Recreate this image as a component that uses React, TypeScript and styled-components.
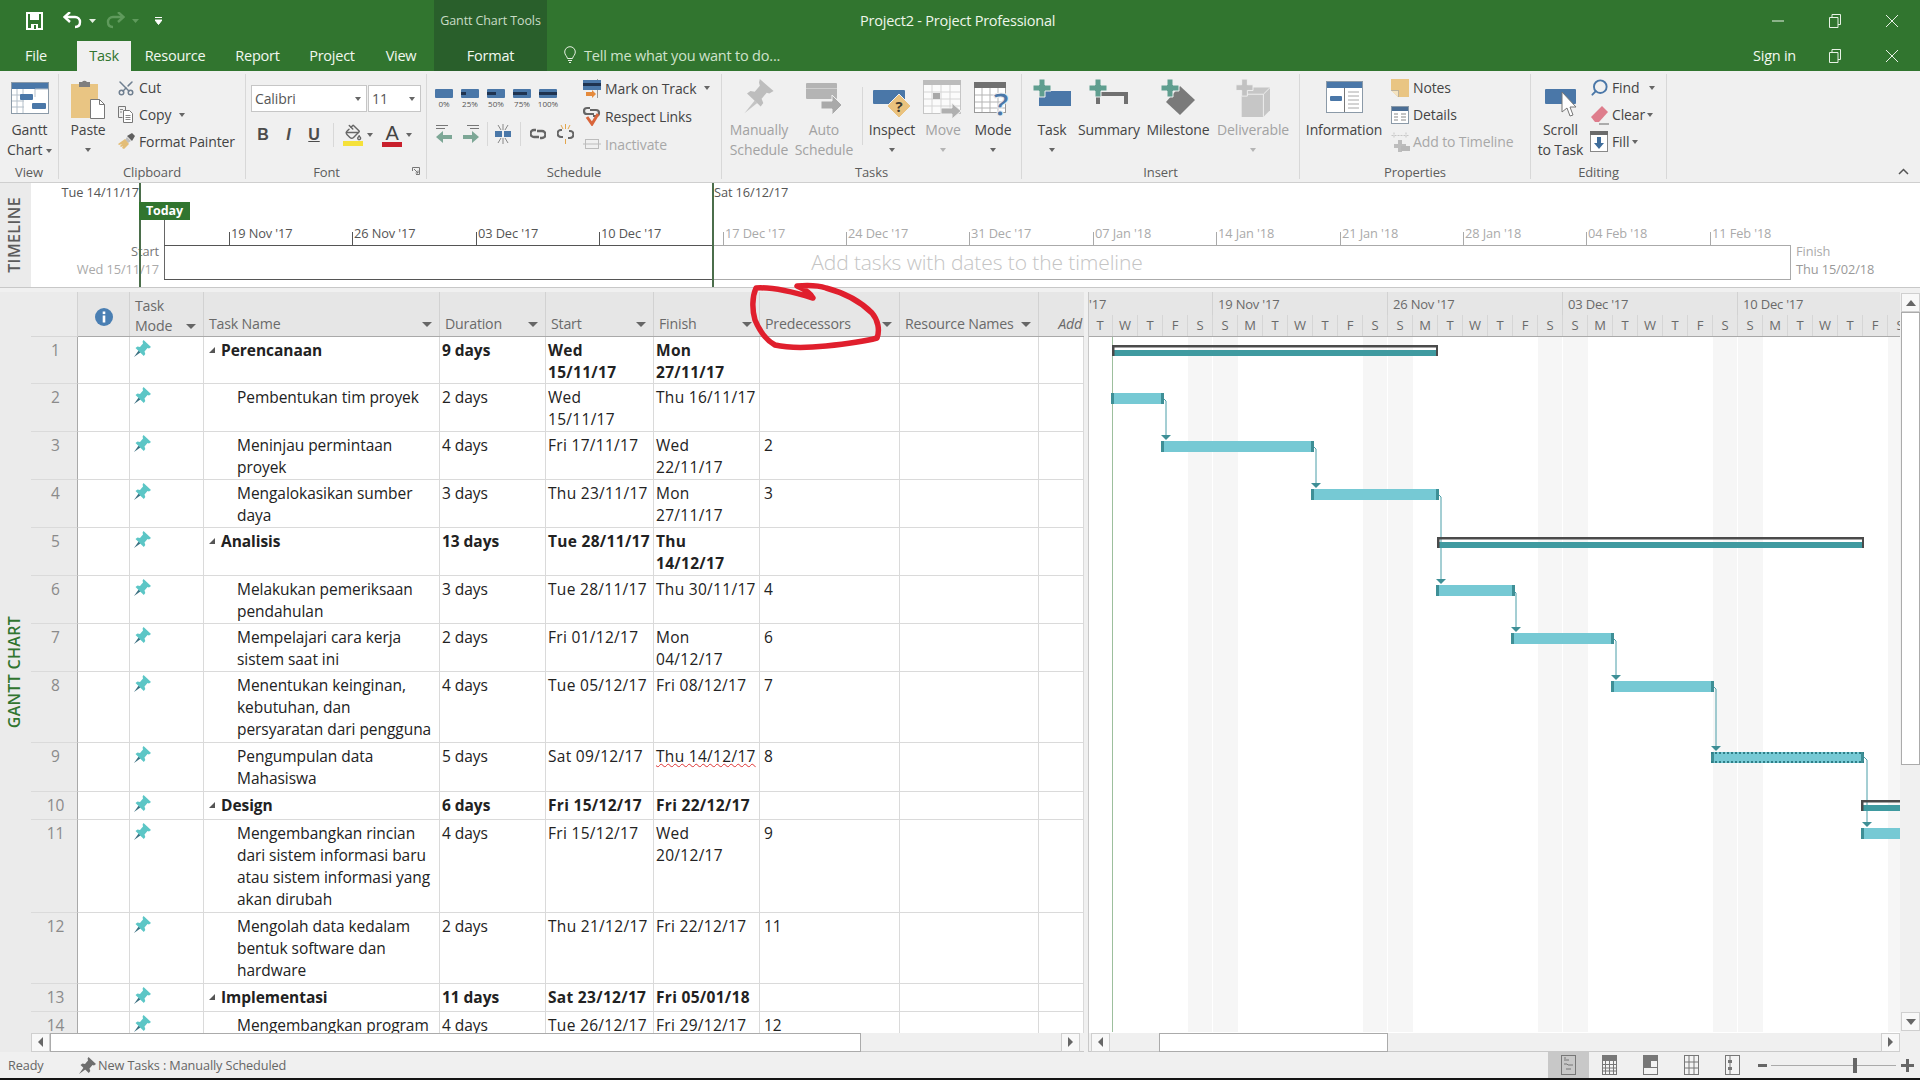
import React from 'react';
import styled, { createGlobalStyle } from 'styled-components';
import { Scissors, Search, PaintBucket } from 'lucide-react';

const Global = createGlobalStyle`
  html, body { margin: 0; padding: 0; background: #fff; overflow: hidden; }
  body { font-family: "Open Sans", "Noto Sans", "Liberation Sans", sans-serif; }
  * { box-sizing: border-box; }
`;

const Page = styled.div`
  position: relative;
  width: 1920px;
  height: 1080px;
  display: flex;
  flex-direction: column;
  overflow: hidden;
  background: #f0f0f0;
`;

/* ---------- title bar ---------- */
const TitleBar = styled.div`
  height: 71px;
  flex: none;
  display: flex;
  background: #31752f;
  color: #fff;
`;
const LeftHead = styled.div`
  width: 434px;
  display: flex;
  flex-direction: column;
`;
const Qat = styled.div`
  height: 41px;
  display: flex;
  align-items: center;
  padding-left: 26px;
`;
const QatSlot = styled.div<{ $w: number }>`
  width: ${p => p.$w}px;
  display: flex;
  align-items: center;
`;
const Tabs = styled.div`
  height: 30px;
  display: flex;
`;
const Tab = styled.div<{ $w: number; $active?: boolean }>`
  width: ${p => p.$w}px;
  display: flex;
  align-items: center;
  justify-content: center;
  padding-bottom: 2px;
  font-size: 14.5px;
  letter-spacing: -0.25px;
  background: ${p => (p.$active ? '#f0f0f0' : 'transparent')};
  color: ${p => (p.$active ? '#31752f' : '#f2f8f0')};
`;
const FileTab = styled(Tab)`
  margin-right: 5px;
`;
const Context = styled.div`
  width: 113px;
  display: flex;
  flex-direction: column;
  background: #295f2b;
`;
const ContextTitle = styled.div`
  height: 41px;
  display: flex;
  align-items: center;
  justify-content: center;
  font-size: 12.5px;
  letter-spacing: -0.1px;
  color: #c9dcc6;
`;
const ContextTab = styled.div`
  height: 30px;
  display: flex;
  align-items: center;
  justify-content: center;
  padding-bottom: 2px;
  font-size: 14.5px;
  letter-spacing: -0.25px;
  color: #f2f8f0;
`;
const RightHead = styled.div`
  flex: 1;
  display: flex;
  flex-direction: column;
`;
const HeadRow = styled.div<{ $h: number }>`
  height: ${p => p.$h}px;
  display: flex;
  align-items: center;
`;
const DocTitle = styled.div`
  margin-left: 313px;
  font-size: 14.5px;
  letter-spacing: -0.22px;
  color: #eef6ea;
`;
const TellMe = styled.div`
  margin-left: 17px;
  padding-bottom: 2px;
  display: flex;
  align-items: center;
  gap: 8px;
  font-size: 14.5px;
  letter-spacing: -0.2px;
  color: #cfe2cb;
`;
const Spring = styled.div`
  flex: 1;
`;
const SignIn = styled.div`
  font-size: 14.5px;
  letter-spacing: -0.25px;
  padding-bottom: 2px;
  color: #f2f8f0;
  margin-right: 10px;
`;
const WinBtn = styled.div`
  width: 57px;
  display: flex;
  justify-content: center;
`;

/* ---------- ribbon ---------- */
const Ribbon = styled.div`
  height: 112px;
  flex: none;
  display: flex;
  background: #f0f0f0;
  border-bottom: 1px solid #cfcfcf;
  color: #444;
  font-size: 14px;
  letter-spacing: -0.12px;
`;
const Group = styled.div<{ $w: number }>`
  position: relative;
  width: ${p => p.$w}px;
  flex: none;
  display: flex;
  flex-direction: column;
  padding-top: 4px;
  &::after {
    content: '';
    position: absolute;
    top: 3px;
    bottom: 3px;
    right: 0;
    width: 1px;
    background: #d8d8d8;
  }
`;
const GroupBody = styled.div<{ $pl?: number }>`
  flex: 1;
  display: flex;
  padding-left: ${p => p.$pl ?? 0}px;
  min-height: 0;
`;
const GroupLabel = styled.div<{ $pr?: number }>`
  height: 20px;
  flex: none;
  display: flex;
  align-items: center;
  justify-content: center;
  font-size: 13px;
  color: #5c5c5c;
  letter-spacing: -0.1px;
  padding-right: ${p => p.$pr ?? 1}px;
`;
const Launcher = styled.div`
  position: absolute;
  right: 7px;
  bottom: 7px;
  display: flex;
`;
const Large = styled.div<{ $w: number; $off?: boolean }>`
  width: ${p => p.$w}px;
  flex: none;
  display: flex;
  flex-direction: column;
  align-items: center;
  color: ${p => (p.$off ? '#a2a2a2' : '#444')};
`;
const LargeIcon = styled.div`
  height: 45px;
  flex: none;
  width: 100%;
  display: flex;
  align-items: flex-start;
  justify-content: center;
  padding-top: 4px;
`;
const LargeText = styled.div`
  line-height: 20px;
  text-align: center;
  white-space: pre;
  display: flex;
  flex-direction: column;
  align-items: center;
`;
const Caret = styled.span<{ $off?: boolean; $ml?: number }>`
  display: inline-block;
  width: 0;
  height: 0;
  border-left: 3.5px solid transparent;
  border-right: 3.5px solid transparent;
  border-top: 4px solid ${p => (p.$off ? '#b5b5b5' : '#666')};
  margin-left: ${p => p.$ml ?? 0}px;
  vertical-align: middle;
`;
const HeadCaret = styled(Caret)`
  border-left-width: 5px;
  border-right-width: 5px;
  border-top: 5px solid #666;
`;
const CaretLine = styled.div`
  height: 20px;
  display: flex;
  align-items: center;
  justify-content: center;
`;
const Stack = styled.div<{ $ml?: number }>`
  display: flex;
  flex-direction: column;
  margin-top: -1px;
  margin-left: ${p => p.$ml ?? 0}px;
`;
const TallStack = styled(Stack)`
  margin-top: -1px;
  & > div {
    height: 28px;
  }
`;
const SmallRow = styled.div<{ $off?: boolean }>`
  height: 27px;
  flex: none;
  display: flex;
  align-items: center;
  white-space: nowrap;
  color: ${p => (p.$off ? '#a8a8a8' : '#444')};
`;
const SmallIcon = styled.div`
  width: 22px;
  flex: none;
  display: flex;
  align-items: center;
`;
const FontCol = styled.div`
  display: flex;
  flex-direction: column;
  padding: 10px 0 0 5px;
`;
const ComboRow = styled.div`
  display: flex;
  gap: 1px;
`;
const Combo = styled.div<{ $w: number }>`
  width: ${p => p.$w}px;
  height: 27px;
  background: #fff;
  border: 1px solid #c6c6c6;
  display: flex;
  align-items: center;
  justify-content: space-between;
  padding: 0 5px 0 3px;
  font-size: 14px;
  color: #555;
`;
const FmtRow = styled.div`
  margin-top: 10px;
  height: 26px;
  display: flex;
  align-items: center;
`;
const FmtBtn = styled.div<{ $w: number; $italic?: boolean; $under?: boolean }>`
  width: ${p => p.$w}px;
  text-align: center;
  font-family: "Liberation Sans", sans-serif;
  font-weight: 700;
  font-size: 16px;
  color: #4c4c4c;
  font-style: ${p => (p.$italic ? 'italic' : 'normal')};
  text-decoration: ${p => (p.$under ? 'underline' : 'none')};
`;
const VSep = styled.div<{ $mx: number; $h: number }>`
  width: 1px;
  height: ${p => p.$h}px;
  margin: 0 ${p => p.$mx}px;
  background: #d8d8d8;
  flex: none;
`;
const FontColor = styled.div`
  width: 22px;
  margin-left: 8px;
  display: flex;
  flex-direction: column;
  align-items: center;
  font-family: "Liberation Sans", sans-serif;
  font-size: 20px;
  line-height: 18px;
  color: #444;
`;
const ColorBar = styled.div<{ $c: string; $w: number }>`
  width: ${p => p.$w}px;
  height: 5px;
  background: ${p => p.$c};
`;
const BucketBox = styled.div`
  width: 24px;
  display: flex;
  flex-direction: column;
  align-items: center;
`;
const SchedCol = styled.div`
  width: 148px;
  display: flex;
  flex-direction: column;
  padding-top: 14px;
`;
const PctRow = styled.div`
  display: flex;
  gap: 8px;
`;
const Pct = styled.div`
  width: 18px;
  display: flex;
  flex-direction: column;
  align-items: center;
`;
const PctBar = styled.div`
  position: relative;
  width: 18px;
  height: 9px;
  border-radius: 1px;
  background: #4a77a8;
`;
const PctFill = styled.div`
  position: absolute;
  left: 0;
  top: 3px;
  height: 3px;
  background: #1f3350;
`;
const PctText = styled.div`
  font-size: 8px;
  line-height: 12px;
  letter-spacing: 0;
  color: #555;
`;
const SchedTools = styled.div`
  margin-top: 12px;
  display: flex;
  align-items: center;
  height: 24px;
`;
const TaskSep = styled.div`
  width: 1px;
  height: 58px;
  margin: 12px 3px 0 8px;
  background: #d8d8d8;
  flex: none;
`;
const Collapse = styled.div`
  margin-left: auto;
  align-self: flex-end;
  padding: 0 11px 7px 0;
  display: flex;
`;

/* ---------- timeline ---------- */
const TimelineWrap = styled.div`
  height: 105px;
  flex: none;
  display: flex;
  border-bottom: 1px solid #c8c8c8;
`;
const SideTag = styled.div<{ $c: string; $ls: number }>`
  width: 31px;
  flex: none;
  display: flex;
  align-items: center;
  justify-content: center;
  padding-right: 4px;
  background: #ebebeb;
  color: ${p => p.$c};
  font-size: 16px;
  font-weight: 600;
  letter-spacing: ${p => p.$ls}px;
  & > span {
    writing-mode: vertical-rl;
    transform: rotate(180deg);
    white-space: nowrap;
  }
`;
const Canvas = styled.div`
  position: relative;
  flex: 1;
  background: #fff;
  font-size: 12.8px;
  letter-spacing: -0.1px;
`;
const Lbl = styled.div<{ $c?: string }>`
  position: absolute;
  white-space: nowrap;
  line-height: 16px;
  color: ${p => p.$c ?? '#555'};
`;
const RangeStart = styled(Lbl)`
  right: calc(100% - 108px);
  top: 1px;
`;
const RangeEnd = styled(Lbl)`
  left: 683px;
  top: 1px;
`;
const RangeLine = styled.div<{ $x: number }>`
  position: absolute;
  left: ${p => p.$x}px;
  top: 0;
  bottom: 0;
  width: 2px;
  background: #4b6e4b;
`;
const Flag = styled.div`
  position: absolute;
  left: 108px;
  top: 19px;
  width: 51px;
  height: 18px;
  background: #31752f;
  color: #fff;
  font-weight: 700;
  font-size: 12.5px;
  line-height: 18px;
  text-align: center;
`;
const BarEdge = styled.div`
  position: absolute;
  left: 133px;
  top: 37px;
  width: 1px;
  height: 59px;
  background: #666;
`;
const HLine = styled.div<{ $x: number; $w: number; $y: number; $c: string }>`
  position: absolute;
  left: ${p => p.$x}px;
  top: ${p => p.$y}px;
  width: ${p => p.$w}px;
  height: 1px;
  background: ${p => p.$c};
`;
const EndBox = styled.div`
  position: absolute;
  left: 1759px;
  top: 62px;
  width: 1px;
  height: 35px;
  background: #aaa;
`;
const Tick = styled.div<{ $c: string }>`
  position: absolute;
  top: 49px;
  width: 1px;
  height: 13px;
  background: ${p => p.$c};
`;
const AddHint = styled.div`
  position: absolute;
  left: 551px;
  width: 790px;
  top: 62px;
  height: 33px;
  display: flex;
  align-items: center;
  justify-content: center;
  font-size: 21px;
  font-weight: 300;
  letter-spacing: -0.1px;
  color: #c4c4c4;
`;
const StartLbl = styled(Lbl)`
  right: calc(100% - 128px);
  top: 60px;
  text-align: right;
  color: #777;
`;
const StartDate = styled(Lbl)`
  right: calc(100% - 128px);
  top: 78px;
  color: #aaa;
`;
const FinishLbl = styled(Lbl)`
  left: 1765px;
  top: 60px;
  color: #aaa;
`;
const FinishDate = styled(Lbl)`
  left: 1765px;
  top: 78px;
  color: #999;
`;

/* ---------- main ---------- */
const Main = styled.div`
  height: 764px;
  flex: none;
  display: flex;
  padding-top: 4px;
  background: #f0f0f0;
`;
const TablePane = styled.div`
  width: 1053px;
  flex: none;
  display: flex;
  flex-direction: column;
`;
const Cols = '47px 52px 74px 236px 106px 108px 106px 140px 139px 45px';
const HeadGrid = styled.div`
  height: 45px;
  flex: none;
  display: grid;
  grid-template-columns: ${Cols};
  background: #e6e6e6;
  border-bottom: 1px solid #a9a9a9;
  color: #6a6a6a;
  font-size: 14.2px;
  letter-spacing: -0.2px;
`;
const HeadCell = styled.div`
  display: flex;
  align-items: flex-end;
  justify-content: space-between;
  padding: 0 7px 2px 5px;
  border-right: 1px solid #d2d2d2;
  line-height: 20px;
  white-space: pre;
`;
const CornerCell = styled(HeadCell)`
  background: #ebebeb;
  margin-bottom: -1px;
  border-bottom: 1px solid #d6d6d6;
`;
const CaretWrap = styled.span`
  height: 20px;
  display: inline-flex;
  align-items: center;
`;
const InfoCell = styled(HeadCell)`
  align-items: center;
  justify-content: center;
  padding: 6px 0 0;
`;
const ModeHead = styled(HeadCell)`
  padding-bottom: 0;
`;
const AddCell = styled(HeadCell)`
  justify-content: flex-end;
  font-style: italic;
  border-right: none;
  padding-right: 2px;
`;
const TableBody = styled.div`
  flex: 1;
  min-height: 0;
  overflow: hidden;
  background: #fff;
`;
const Row = styled.div<{ $h: number; $bold?: boolean }>`
  height: ${p => p.$h}px;
  display: grid;
  grid-template-columns: ${Cols};
  font-size: 15.5px;
  line-height: 22px;
  letter-spacing: -0.05px;
  color: #222;
  font-weight: ${p => (p.$bold ? 700 : 400)};
`;
const Cell = styled.div`
  padding: 1.5px 0 0 2px;
  border-right: 1px solid #dadada;
  border-bottom: 1px solid #dadada;
  white-space: pre;
  overflow: hidden;
`;
const DateCell = styled(Cell)`
  letter-spacing: 0.3px;
`;
const PredCell = styled(Cell)`
  padding-left: 4px;
`;
const NumCell = styled(Cell)`
  background: #ebebeb;
  border-right: 1px solid #a9a9a9;
  padding-left: 3px;
  color: #8a8a8a;
  font-weight: 400;
  text-align: center;
`;
const ModeCell = styled(Cell)`
  padding: 3px 0 0 4px;
`;
const NameCell = styled(Cell)<{ $sum?: boolean }>`
  display: flex;
  padding-left: ${p => (p.$sum ? 5 : 33)}px;
`;
const Twist = styled.div`
  width: 12px;
  height: 22px;
  display: flex;
  align-items: center;
  flex: none;
`;
const Squiggle = styled.span`
  text-decoration: underline wavy #d33;
  text-decoration-thickness: 1px;
`;
const ScrollH = styled.div`
  height: 19px;
  flex: none;
  display: flex;
  align-items: center;
  background: #f0f0f0;
  border-bottom: 1px solid #c8c8c8;
`;
const Arrow = styled.div`
  width: 19px;
  height: 19px;
  background: #f8f8f8;
  border: 1px solid #cfcfcf;
  display: flex;
  align-items: center;
  justify-content: center;
  flex: none;
`;
const Thumb = styled.div<{ $w: number; $ml?: number }>`
  width: ${p => p.$w}px;
  margin-left: ${p => p.$ml ?? 0}px;
  height: 19px;
  background: #fff;
  border: 1px solid #ababab;
  flex: none;
`;
const TriL = styled.span`
  width: 0;
  height: 0;
  border-top: 5px solid transparent;
  border-bottom: 5px solid transparent;
  border-right: 5px solid #666;
`;
const TriR = styled.span`
  width: 0;
  height: 0;
  border-top: 5px solid transparent;
  border-bottom: 5px solid transparent;
  border-left: 5px solid #666;
`;
const TriU = styled.span`
  width: 0;
  height: 0;
  border-left: 5px solid transparent;
  border-right: 5px solid transparent;
  border-bottom: 6px solid #666;
`;
const TriD = styled.span`
  width: 0;
  height: 0;
  border-left: 5px solid transparent;
  border-right: 5px solid transparent;
  border-top: 6px solid #666;
`;
const Splitter = styled.div`
  width: 4px;
  flex: none;
  background: #f0f0f0;
`;
const GanttPane = styled.div`
  width: 812px;
  flex: none;
  display: flex;
  flex-direction: column;
  border-left: 1px solid #c8c8c8;
`;
const GanttHead = styled.div`
  height: 45px;
  flex: none;
  background: #e6e6e6;
  border-bottom: 1px solid #a9a9a9;
  overflow: hidden;
  color: #6a6a6a;
  font-size: 13.5px;
  letter-spacing: -0.2px;
`;
const WeekRow = styled.div`
  height: 23px;
  display: flex;
  width: 1100px;
  margin-left: -1px;
`;
const Week = styled.div<{ $w: number }>`
  width: ${p => p.$w}px;
  flex: none;
  padding: 3px 0 0 ${p => (p.$w < 170 ? 1 : 5)}px;
  line-height: 18px;
  font-size: 13px;
  border-right: 1px solid #d2d2d2;
`;
const DayRow = styled.div`
  height: 21px;
  display: flex;
  width: 1100px;
  margin-left: -1px;
`;
const Day = styled.div`
  width: 25px;
  flex: none;
  text-align: center;
  line-height: 20px;
  font-size: 13px;
  border-right: 1px solid #d6d6d6;
`;
const Chart = styled.div`
  flex: 1;
  min-height: 0;
  background: #fff;
  overflow: hidden;
  display: flex;
`;
const ScrollV = styled.div`
  width: 19px;
  margin-left: 1px;
  flex: none;
  display: flex;
  flex-direction: column;
  padding-top: 1px;
  padding-bottom: 21px;
`;
const VThumb = styled.div`
  height: 453px;
  background: #fff;
  border: 1px solid #ababab;
`;
const VFill = styled.div`
  flex: 1;
`;
const GanttScrollBar = styled(ScrollH)`
  padding-left: 2px;
`;
const Status = styled.div`
  height: 26px;
  flex: none;
  display: flex;
  align-items: center;
  background: #f0f0f0;
  color: #666;
  font-size: 12.7px;
  letter-spacing: -0.1px;
`;
const Ready = styled.div`
  width: 79px;
  padding-left: 8px;
`;
const NewTasks = styled.div`
  display: flex;
  align-items: center;
  gap: 2px;
`;
const ViewBtn = styled.div<{ $on?: boolean }>`
  width: 41px;
  height: 26px;
  display: flex;
  align-items: center;
  justify-content: center;
  background: ${p => (p.$on ? '#c8c8c8' : 'transparent')};
`;
const Zoom = styled.div`
  margin-left: 5px;
  width: 162px;
  display: flex;
  align-items: center;
  color: #666;
`;
const ZTrack = styled.div`
  position: relative;
  width: 125px;
  height: 1px;
  margin: 0 5px 0 4px;
  background: #aaa;
`;
const ZThumb = styled.div`
  position: absolute;
  left: 82px;
  top: -7px;
  width: 4px;
  height: 15px;
  background: #666;
`;
const BlackEdge = styled.div`
  height: 2px;
  flex: 1;
  background: #141414;
`;
const Ink = styled.svg`
  position: absolute;
  left: 745px;
  top: 280px;
  pointer-events: none;
`;

/* ---------- icons ---------- */
const GanttIcon = () => (
  <svg width="38" height="35" viewBox="0 -3 38 35">
    <rect x=".5" y=".5" width="37" height="31" fill="#fff" stroke="#8b9aa8" />
    <rect x="1" y="1" width="36" height="6" fill="#4a77a8" />
    <path d="M6 7v24M12 7v24M1 13h17M1 19h12M1 25h12M24 7v8M24 7h13" stroke="#b5c0ca" fill="none" />
    <rect x="9" y="12" width="13" height="6" rx="1" fill="#4a77a8" />
    <rect x="21" y="21" width="14" height="6" rx="1" fill="#4a77a8" />
  </svg>
);
const PasteIcon = () => (
  <svg width="35" height="40" viewBox="0 0 35 40">
    <rect x="0" y="5" width="27" height="34" fill="#e9c583" />
    <path d="M8 8V3h3a3 3 0 0 1 5 0h3v5z" fill="#7f7f7f" />
    <path d="M19.500 20.500h9l5 5v14h-14z" fill="#fff" stroke="#777" />
    <path d="M28.500 20.500v5h5" fill="none" stroke="#777" />
  </svg>
);
const CopyIcon = () => (
  <svg width="17" height="19" viewBox="0 0 17 19">
    <path d="M1.500 1.500h7v4M1.500 1.500v11h4" fill="none" stroke="#777" />
    <path d="M6.500 5.500h6l3 3v9h-9z" fill="#fff" stroke="#777" />
    <path d="M8.500 10.500h5M8.500 12.500h5M8.500 14.500h5M3 4.500h3M3 7h2" stroke="#888" fill="none" />
  </svg>
);
const PainterIcon = () => (
  <svg width="18" height="17" viewBox="0 0 18 17">
    <path d="M10 3l5-3 3 3-3 5z" fill="#5f5f5f" />
    <path d="M10 4l4 4-3 2-3-3z" fill="#bfbfbf" />
    <path d="M8 6l4 5-5 5-2-1 1-2-2 1-1-1 2-2-3 1-1-1z" fill="#e3bd77" />
  </svg>
);
const ArrowsIcon = () => (
  <svg width="45" height="20" viewBox="0 0 45 20">
    <path d="M1 1.500h12M1 4.500h9" stroke="#777" fill="none" />
    <path d="M1 13l7-6v4h9v4H8v4z" fill="#7da796" />
    <path d="M32 1.500h12M35 4.500h9" stroke="#777" fill="none" />
    <path d="M44 13l-7-6v4h-9v4h9v4z" fill="#7da796" />
  </svg>
);
const SplitIcon = () => (
  <svg width="16" height="20" viewBox="0 0 16 20">
    <rect x="0" y="7" width="7" height="6" fill="#4a77a8" />
    <rect x="9" y="7" width="7" height="6" fill="#4a77a8" />
    <path d="M8 0v6M8 14v6M3 1l3 5M13 1l-3 5M3 19l3-5M13 19l-3-5" stroke="#888" fill="none" />
  </svg>
);
const LinkIcon = () => (
  <svg width="16" height="12" viewBox="0 0 16 12">
    <path d="M6 2H4a3.500 3.500 0 0 0 0 7h5M7 3h5a3.500 3.500 0 0 1 0 7h-2" fill="none" stroke="#666" strokeWidth="2.400" />
  </svg>
);
const UnlinkIcon = () => (
  <svg width="17" height="20" viewBox="0 0 17 20">
    <path d="M5 6H4a3.500 3.500 0 0 0 0 7h2M12 7h1a3.500 3.500 0 0 1 0 7h-2" fill="none" stroke="#666" strokeWidth="2.200" />
    <path d="M8.500 0v5M8.500 15v5M4 1l2 4M13 1l-2 4" stroke="#e3a64d" fill="none" />
  </svg>
);
const TrackIcon = () => (
  <svg width="18" height="19" viewBox="0 0 18 19">
    <path d="M14.500 0v19" stroke="#999" />
    <rect x="0" y="1" width="18" height="10" fill="#4a77a8" />
    <rect x="0" y="4" width="18" height="3" fill="#1f3350" />
    <path d="M3 13h6v-2l4 4-4 4v-2H3z" fill="#e58a3c" />
  </svg>
);
const RespectIcon = () => (
  <svg width="19" height="20" viewBox="0 0 19 20">
    <path d="M7 2H4a3 3 0 0 0 0 6h7M7 4h6a3 3 0 0 1 0 6h-3" fill="none" stroke="#666" strokeWidth="2.200" />
    <path d="M4 11l5 7 6-10" fill="none" stroke="#d9653b" strokeWidth="3" />
  </svg>
);
const InactiveIcon = () => (
  <svg width="18" height="12" viewBox="0 0 18 12">
    <rect x="2.500" y="1.500" width="13" height="9" fill="none" stroke="#bcbcbc" />
    <path d="M0 6h18" stroke="#bcbcbc" />
  </svg>
);
const PinBig = () => (
  <svg width="34" height="36" viewBox="0 0 36 42">
    <path d="M1 40l12-15 3 3z" fill="#c4c4c4" />
    <path d="M19 0l16 14-5 3-3-1-6 7 2 5-3 4-16-15 4-3 5 1 6-7-1-4z" fill="#bdbdbd" />
  </svg>
);
const AutoIcon = () => (
  <svg width="36" height="36" viewBox="0 0 36 36">
    <rect x="0" y="4" width="31" height="16" rx="1" fill="#b4b4b4" />
    <rect x="0" y="9" width="31" height="1" fill="#cfcfcf" />
    <path d="M15 22h11v-6l10 10-10 10v-6H15z" fill="#a9a9a9" stroke="#f0f0f0" />
  </svg>
);
const InspectIcon = () => (
  <svg width="38" height="40" viewBox="0 0 38 40">
    <rect x="0" y="11" width="32" height="14" rx="1" fill="#4a77a8" />
    <path d="M26 15l12 12-12 12-12-12z" fill="#eac27e" stroke="#f0f0f0" />
    <text x="26" y="33" textAnchor="middle" fontSize="15" fontWeight="700" fontFamily="Open Sans, sans-serif" fill="#3f3a30">?</text>
  </svg>
);
const MoveIcon = () => (
  <svg width="40" height="40" viewBox="0 0 40 40">
    <rect x=".5" y="1.500" width="37" height="33" fill="#fbfbfb" stroke="#c6c6c6" />
    <rect x="0" y="1" width="38" height="5" fill="#bcbcbc" />
    <path d="M9 6v28M18 6v28M27 6v28M1 13h36M1 20h36M1 27h36" stroke="#d5d5d5" />
    <rect x="10" y="14" width="7" height="6" fill="#a8a8a8" />
    <path d="M18 29h11v-5l9 8-9 8v-5H18z" fill="#b0b0b0" stroke="#f0f0f0" />
  </svg>
);
const ModeIcon = () => (
  <svg width="38" height="40" viewBox="0 0 38 40">
    <rect x=".5" y="3.500" width="31" height="30" fill="#fff" stroke="#999" />
    <rect x="0" y="3" width="32" height="6" fill="#707070" />
    <path d="M8 9v24M16 9v24M24 9v24M1 16h30M1 23h30M1 29h30" stroke="#b5b5b5" />
    <text x="27" y="37" textAnchor="middle" fontSize="33" fontWeight="700" fontFamily="Open Sans, sans-serif" fill="#4a77a8" stroke="#f0f0f0" strokeWidth="1">?</text>
  </svg>
);
const Plus = ({ c }: { c: string }) => (
  <path d="M6 0h6v6h6v6h-6v6H6v-6H0V6h6z" fill={c} stroke="#f0f0f0" />
);
const TaskIcon = () => (
  <svg width="38" height="30" viewBox="0 0 38 30">
    <rect x="6" y="12" width="32" height="15" fill="#4a77a8" />
    <g><Plus c="#5f9e8f" /></g>
  </svg>
);
const SummaryIcon = () => (
  <svg width="40" height="30" viewBox="0 0 40 30">
    <path d="M7 13h32v12h-4v-8H11v8H7z" fill="#707070" />
    <g><Plus c="#5f9e8f" /></g>
  </svg>
);
const MilestoneIcon = () => (
  <svg width="34" height="36" viewBox="0 0 34 36">
    <path d="M19 7l15 14-15 15L5 23z" fill="#7a7a7a" />
    <g><Plus c="#5f9e8f" /></g>
  </svg>
);
const DeliverIcon = () => (
  <svg width="34" height="38" viewBox="0 0 36 40">
    <path d="M6 14l8-5h22v24l-7 7H6z" fill="#c6c6c6" />
    <path d="M6 16h23v24M29 16l7-7" stroke="#f0f0f0" fill="none" />
    <g><Plus c="#c2c2c2" /></g>
  </svg>
);
const InfoIcon = () => (
  <svg width="37" height="34" viewBox="0 -2 37 34">
    <rect x=".5" y=".5" width="36" height="31" fill="#fff" stroke="#8b9aa8" />
    <rect x="1" y="1" width="35" height="6" fill="#4a77a8" />
    <path d="M18.500 7v24" stroke="#777" />
    <path d="M22 11h11M22 15h11M22 19h11M22 23h11M22 27h11" stroke="#a8a8a8" />
    <rect x="4" y="15" width="12" height="5" rx="1" fill="#4a77a8" />
  </svg>
);
const NoteIcon = () => (
  <svg width="18" height="18" viewBox="0 0 18 18">
    <path d="M0 0h18v18H7l-7-7z" fill="#e9c583" />
    <path d="M0 11.500h7.500V18" fill="#f4e3c0" stroke="#999" strokeWidth=".6" />
  </svg>
);
const DetailsIcon = () => (
  <svg width="18" height="18" viewBox="0 0 18 18">
    <rect x=".5" y=".5" width="17" height="17" fill="#fff" stroke="#8b9aa8" />
    <rect x="1" y="1" width="16" height="4" fill="#4a6d94" />
    <path d="M3 8h4M3 11h4M3 14h4M10 8h5M10 11h5M10 14h5" stroke="#888" />
  </svg>
);
const AddTimelineIcon = () => (
  <svg width="19" height="20" viewBox="0 0 19 20">
    <path d="M.500 3.500h17M3 .500v6M15 .500v6" stroke="#c6c6c6" strokeDasharray="2 1" fill="none" />
    <path d="M7 8h4v4h4v4h-4v4H7v-4H3v-4h4z" fill="#bdbdbd" />
    <rect x="10" y="14" width="9" height="5" fill="#b8b8b8" />
  </svg>
);
const ScrollIcon = () => (
  <svg width="32" height="38" viewBox="0 0 32 38">
    <rect x="0" y="10" width="31" height="15" rx="1" fill="#4a77a8" />
    <path d="M17 13v20l5-4 3 8 3-1-3-8h6z" fill="#fff" stroke="#777" />
  </svg>
);
const EraserIcon = () => (
  <svg width="19" height="20" viewBox="0 0 19 20">
    <path d="M12 1l6 6-9 10H5l-4-5z" fill="#de7d8c" />
    <path d="M9 19h10" stroke="#666" />
  </svg>
);
const FillIcon = () => (
  <svg width="18" height="21" viewBox="0 0 18 21">
    <rect x=".5" y=".5" width="17" height="20" fill="#fff" stroke="#888" />
    <rect x="0" y="0" width="18" height="4" fill="#6b6b6b" />
    <path d="M7 6h4v6h3l-5 6-5-6h3z" fill="#3f6d9b" />
  </svg>
);
const PinSmall = ({ c, stem }: { c: string; stem: string }) => (
  <svg width="17" height="17" viewBox="0 0 17 17">
    <path d="M0 17l5-7 2 2z" fill={stem} />
    <path d="M9.500 0L17 7l-2 1.500-1.500-.5-3 3.500.8 2.500L9.800 16 1.500 8l2-1.600 2.500.6 3-3.500-.4-2z" fill={c} />
  </svg>
);
const Lamp = () => (
  <svg width="12" height="18" viewBox="0 0 12 18">
    <path d="M3.500 12.500C3 10 .7 9 .7 6a5.300 5.300 0 0 1 10.600 0c0 3-2.300 4-2.800 6.500z" fill="none" stroke="#e6f0e2" />
    <path d="M4 14.500h4M5 16.500h2" stroke="#e6f0e2" />
  </svg>
);
const SaveIcon = () => (
  <svg width="17" height="18" viewBox="0 0 17 18">
    <path d="M1 1h15v16H1z" fill="none" stroke="#fff" strokeWidth="2" />
    <rect x="4" y="2" width="9" height="6" fill="#fff" />
    <rect x="5" y="12" width="7" height="5" fill="#fff" />
    <rect x="8" y="13" width="2" height="4" fill="#31752f" />
  </svg>
);
const UndoIcon = ({ c, flip }: { c: string; flip?: boolean }) => (
  <svg width="19" height="17" viewBox="0 0 19 17" style={flip ? { transform: 'scaleX(-1)' } : undefined}>
    <path d="M2 5h10a5 5 0 0 1 5 5c0 3-2 5-5 5" fill="none" stroke={c} strokeWidth="2.400" />
    <path d="M7 0L1.500 5 7 10" fill="none" stroke={c} strokeWidth="2.400" />
  </svg>
);
const WhiteCaret = ({ c }: { c: string }) => (
  <svg width="7" height="4" viewBox="0 0 7 4"><path d="M0 0h7L3.500 4z" fill={c} /></svg>
);
const QatMore = () => (
  <svg width="7" height="8" viewBox="0 0 7 8"><path d="M0 .5h7M0 3h7L3.500 7.500z" stroke="#fff" fill="#fff" strokeWidth="1" /></svg>
);
const MinIcon = () => <svg width="12" height="2" viewBox="0 0 12 2"><path d="M0 1h12" stroke="#e8f2e6" /></svg>;
const RestoreIcon = () => (
  <svg width="12" height="14" viewBox="0 0 12 14">
    <path d="M.5 3.500h8.500v10H.5z M3 3.500V.5h8.500v10H9" fill="none" stroke="#e8f2e6" />
  </svg>
);
const CloseIcon = () => (
  <svg width="14" height="14" viewBox="0 0 14 14"><path d="M1 1l12 12M13 1L1 13" stroke="#e8f2e6" /></svg>
);
const TwistIcon = () => (
  <svg width="6" height="6" viewBox="0 0 6 6"><path d="M6 0v6H0z" fill="#555" /></svg>
);
const CollapseIcon = () => (
  <svg width="11" height="7" viewBox="0 0 11 7"><path d="M1 6l4.500-4.500L10 6" fill="none" stroke="#555" strokeWidth="1.500" /></svg>
);
const LauncherIcon = () => (
  <svg width="8" height="8" viewBox="0 0 8 8">
    <path d="M.5 4V.5H7.500V7.500H4M2 2l4 4M6 3.500V6H3.500" fill="none" stroke="#777" />
  </svg>
);
const InfoBadge = () => (
  <svg width="18" height="18" viewBox="0 0 18 18">
    <circle cx="9" cy="9" r="9" fill="#4a7fb3" />
    <rect x="7.700" y="7.500" width="2.600" height="7" fill="#fff" />
    <rect x="7.700" y="3.500" width="2.600" height="2.600" fill="#fff" />
  </svg>
);
const ViewIcon = ({ k }: { k: number }) => (
  <svg width="16" height="20" viewBox="0 0 16 20">
    <rect x=".5" y=".5" width="14" height="19" fill={k === 0 ? 'none' : '#f4f4f4'} stroke="#777" />
    {k === 0 && <path d="M3 5h5M3 9h3l1 1h5M5 14h5M3 3h2" stroke="#777" fill="none" />}
    {k === 1 && <><rect x="1" y="1" width="13" height="5" fill="#777" /><path d="M3.500 6v13M7.500 6v13M11.500 6v13M1 9.500h13M1 13h13M1 16h13" stroke="#777" /></>}
    {k === 2 && <><rect x="1" y="1" width="13" height="5" fill="#777" /><rect x="1" y="6" width="7" height="6" fill="#777" /><path d="M1 12.500h13" stroke="#777" /></>}
    {k === 3 && <path d="M5 1v18M10 1v18M1 7h13M1 13h13" stroke="#777" />}
    {k === 4 && <><path d="M5 1v18" stroke="#777" /><rect x="3" y="5" width="4" height="3" fill="#777" /><rect x="3" y="12" width="4" height="3" fill="#777" /></>}
  </svg>
);

/* ---------- data ---------- */
type R = { n: number; name: string; dur: string; start: string; finish: string; pred: string; h: number; sum?: boolean; wavy?: boolean };
const rows: R[] = [
  { n: 1, name: 'Perencanaan', dur: '9 days', start: 'Wed\n15/11/17', finish: 'Mon\n27/11/17', pred: '', h: 47, sum: true },
  { n: 2, name: 'Pembentukan tim proyek', dur: '2 days', start: 'Wed\n15/11/17', finish: 'Thu 16/11/17', pred: '', h: 48 },
  { n: 3, name: 'Meninjau permintaan\nproyek', dur: '4 days', start: 'Fri 17/11/17', finish: 'Wed\n22/11/17', pred: '2', h: 48 },
  { n: 4, name: 'Mengalokasikan sumber\ndaya', dur: '3 days', start: 'Thu 23/11/17', finish: 'Mon\n27/11/17', pred: '3', h: 48 },
  { n: 5, name: 'Analisis', dur: '13 days', start: 'Tue 28/11/17', finish: 'Thu\n14/12/17', pred: '', h: 48, sum: true },
  { n: 6, name: 'Melakukan pemeriksaan\npendahulan', dur: '3 days', start: 'Tue 28/11/17', finish: 'Thu 30/11/17', pred: '4', h: 48 },
  { n: 7, name: 'Mempelajari cara kerja\nsistem saat ini', dur: '2 days', start: 'Fri 01/12/17', finish: 'Mon\n04/12/17', pred: '6', h: 48 },
  { n: 8, name: 'Menentukan keinginan,\nkebutuhan, dan\npersyaratan dari pengguna', dur: '4 days', start: 'Tue 05/12/17', finish: 'Fri 08/12/17', pred: '7', h: 71 },
  { n: 9, name: 'Pengumpulan data\nMahasiswa', dur: '5 days', start: 'Sat 09/12/17', finish: 'Thu 14/12/17', pred: '8', h: 49, wavy: true },
  { n: 10, name: 'Design', dur: '6 days', start: 'Fri 15/12/17', finish: 'Fri 22/12/17', pred: '', h: 28, sum: true },
  { n: 11, name: 'Mengembangkan rincian\ndari sistem informasi baru\natau sistem informasi yang\nakan dirubah', dur: '4 days', start: 'Fri 15/12/17', finish: 'Wed\n20/12/17', pred: '9', h: 93 },
  { n: 12, name: 'Mengolah data kedalam\nbentuk software dan\nhardware', dur: '2 days', start: 'Thu 21/12/17', finish: 'Fri 22/12/17', pred: '11', h: 71 },
  { n: 13, name: 'Implementasi', dur: '11 days', start: 'Sat 23/12/17', finish: 'Fri 05/01/18', pred: '', h: 28, sum: true },
  { n: 14, name: 'Mengembangkan program', dur: '4 days', start: 'Tue 26/12/17', finish: 'Fri 29/12/17', pred: '12', h: 28 },
];
const scale = [
  "19 Nov '17", "26 Nov '17", "03 Dec '17", "10 Dec '17", "17 Dec '17", "24 Dec '17", "31 Dec '17",
  "07 Jan '18", "14 Jan '18", "21 Jan '18", "28 Jan '18", "04 Feb '18", "11 Feb '18",
];
const days = 'T W T F S S M T W T F S S M T W T F S S M T W T F S S M T W T F S S'.split(' ');
const weeks = [
  { t: "'17", w: 125 },
  { t: "19 Nov '17", w: 175 },
  { t: "26 Nov '17", w: 175 },
  { t: "03 Dec '17", w: 175 },
  { t: "10 Dec '17", w: 175 },
];
const pcts = [0, 25, 50, 75, 100];

const OX = 1089;
const OY = 337;
const tasks = [
  [1111, 1164, 393],
  [1161, 1314, 441],
  [1311, 1439, 489],
  [1436, 1515, 585],
  [1511, 1614, 633],
  [1611, 1714, 681],
  [1711, 1864, 752],
  [1861, 1900, 828],
];
const summaries = [
  [1112, 1438, 345],
  [1437, 1864, 537],
  [1861, 1900, 800],
];
const links = [
  [1166, 398, 441],
  [1316, 446, 489],
  [1441, 494, 585],
  [1516, 590, 633],
  [1616, 638, 681],
  [1716, 686, 752],
  [1867, 757, 828],
];

const GanttSvg = () => (
  <svg width="811" height="695" viewBox="0 0 811 695">
    {[0, 1, 2, 3, 4].map(i => (
      <g key={i}>
        <rect x={99 + i * 175} y="0" width="24" height="695" fill="#f6f6f6" />
        <rect x={124 + i * 175} y="0" width="25" height="695" fill="#f6f6f6" />
      </g>
    ))}
    <path d="M23.500 0v695" stroke="#9dbf9d" />
    {links.map(([x, y1, y2], i) => (
      <g key={i}>
        <path d={`M${x - 3 - OX} ${y1 - OY}l3 3V${y2 - 3 - OY}`} fill="none" stroke="#4a9ea8" />
        <path d={`M${x - 5 - OX} ${y2 - 6 - OY}h10l-5 5z`} fill="#3e8f96" />
      </g>
    ))}
    {tasks.map(([a, b, y], i) => (
      <g key={i}>
        <rect x={a - OX} y={y - OY} width={b - a} height="11" fill="#76c9d4" />
        <rect x={a - OX} y={y - OY} width="3" height="11" fill="#3e8f96" />
        {b < 1900 && <rect x={b - 3 - OX} y={y - OY} width="3" height="11" fill="#3e8f96" />}
        {i === 6 && (
          <path d={`M${a - OX} ${y - OY + 1}H${b - OX}M${a - OX} ${y - OY + 10}H${b - OX}`} stroke="#2f7f88" strokeWidth="2" strokeDasharray="2 2" fill="none" />
        )}
      </g>
    ))}
    {summaries.map(([a, b, y], i) => (
      <g key={i}>
        <rect x={a - OX} y={y - OY} width={b - a} height="2.500" fill="#4a4a4a" />
        <rect x={a - OX} y={y - OY + 5} width={b - a} height="6" fill="#3f9aa0" />
        <rect x={a - OX} y={y - OY} width="2.500" height="11" fill="#4a4a4a" />
        {b < 1900 && <rect x={b - 2 - OX} y={y - OY} width="2" height="11" fill="#4a4a4a" />}
      </g>
    ))}
  </svg>
);

export default function App() {
  return (
    <Page>
      <Global />
      <TitleBar>
        <LeftHead>
          <Qat>
            <QatSlot $w={37}><SaveIcon /></QatSlot>
            <QatSlot $w={26}><UndoIcon c="#fff" /></QatSlot>
            <QatSlot $w={17}><WhiteCaret c="#e5f0e2" /></QatSlot>
            <QatSlot $w={26}><UndoIcon c="#5f9a5c" flip /></QatSlot>
            <QatSlot $w={23}><WhiteCaret c="#5f9a5c" /></QatSlot>
            <QatSlot $w={10}><QatMore /></QatSlot>
          </Qat>
          <Tabs>
            <FileTab $w={72}>File</FileTab>
            <Tab $w={54} $active>Task</Tab>
            <Tab $w={88}>Resource</Tab>
            <Tab $w={77}>Report</Tab>
            <Tab $w={72}>Project</Tab>
            <Tab $w={66}>View</Tab>
          </Tabs>
        </LeftHead>
        <Context>
          <ContextTitle>Gantt Chart Tools</ContextTitle>
          <ContextTab>Format</ContextTab>
        </Context>
        <RightHead>
          <HeadRow $h={41}>
            <DocTitle>Project2 - Project Professional</DocTitle>
            <Spring />
            <WinBtn><MinIcon /></WinBtn>
            <WinBtn><RestoreIcon /></WinBtn>
            <WinBtn><CloseIcon /></WinBtn>
          </HeadRow>
          <HeadRow $h={30}>
            <TellMe><Lamp />Tell me what you want to do...</TellMe>
            <Spring />
            <SignIn>Sign in</SignIn>
            <WinBtn><RestoreIcon /></WinBtn>
            <WinBtn><CloseIcon /></WinBtn>
          </HeadRow>
        </RightHead>
      </TitleBar>

      <Ribbon>
        <Group $w={59}>
          <GroupBody>
            <Large $w={59}>
              <LargeIcon><GanttIcon /></LargeIcon>
              <LargeText>Gantt<span>Chart <Caret /></span></LargeText>
            </Large>
          </GroupBody>
          <GroupLabel>View</GroupLabel>
        </Group>
        <Group $w={187}>
          <GroupBody>
            <Large $w={58}>
              <LargeIcon><PasteIcon /></LargeIcon>
              <LargeText>Paste</LargeText>
              <CaretLine><Caret /></CaretLine>
            </Large>
            <Stack>
              <SmallRow><SmallIcon><Scissors size={18} color="#6f7f90" style={{ transform: 'rotate(-90deg)' }} /></SmallIcon>Cut</SmallRow>
              <SmallRow><SmallIcon><CopyIcon /></SmallIcon>Copy <Caret $ml={8} /></SmallRow>
              <SmallRow><SmallIcon><PainterIcon /></SmallIcon>Format Painter</SmallRow>
            </Stack>
          </GroupBody>
          <GroupLabel>Clipboard</GroupLabel>
        </Group>
        <Group $w={181}>
          <GroupBody>
            <FontCol>
              <ComboRow>
                <Combo $w={116}>Calibri<Caret /></Combo>
                <Combo $w={53}>11<Caret /></Combo>
              </ComboRow>
              <FmtRow>
                <FmtBtn $w={24}>B</FmtBtn>
                <FmtBtn $w={27} $italic>I</FmtBtn>
                <FmtBtn $w={24} $under>U</FmtBtn>
                <VSep $mx={7} $h={24} />
                <BucketBox><PaintBucket size={17} color="#666" /><ColorBar $c="#f5e13a" $w={20} /></BucketBox>
                <Caret $ml={2} />
                <FontColor>A<ColorBar $c="#c8202c" $w={20} /></FontColor>
                <Caret $ml={3} />
              </FmtRow>
            </FontCol>
          </GroupBody>
          <GroupLabel $pr={20}>Font</GroupLabel>
          <Launcher><LauncherIcon /></Launcher>
        </Group>
        <Group $w={295}>
          <GroupBody $pl={8}>
            <SchedCol>
              <PctRow>
                {pcts.map(v => (
                  <Pct key={v}>
                    <PctBar>{v > 0 && <PctFill style={{ width: `${v}%` }} />}</PctBar>
                    <PctText>{v}%</PctText>
                  </Pct>
                ))}
              </PctRow>
              <SchedTools>
                <ArrowsIcon />
                <VSep $mx={7} $h={24} />
                <SplitIcon />
                <VSep $mx={9} $h={24} />
                <LinkIcon />
                <VSep $mx={5} $h={0} />
                <UnlinkIcon />
              </SchedTools>
            </SchedCol>
            <TallStack>
              <SmallRow><SmallIcon><TrackIcon /></SmallIcon>Mark on Track <Caret $ml={8} /></SmallRow>
              <SmallRow><SmallIcon><RespectIcon /></SmallIcon>Respect Links</SmallRow>
              <SmallRow $off><SmallIcon><InactiveIcon /></SmallIcon>Inactivate</SmallRow>
            </TallStack>
          </GroupBody>
          <GroupLabel>Schedule</GroupLabel>
        </Group>
        <Group $w={300}>
          <GroupBody $pl={2}>
            <Large $w={70} $off>
              <LargeIcon><PinBig /></LargeIcon>
              <LargeText>Manually{'\n'}Schedule</LargeText>
            </Large>
            <Large $w={60} $off>
              <LargeIcon><AutoIcon /></LargeIcon>
              <LargeText>Auto{'\n'}Schedule</LargeText>
            </Large>
            <TaskSep />
            <Large $w={52}>
              <LargeIcon><InspectIcon /></LargeIcon>
              <LargeText>Inspect</LargeText>
              <CaretLine><Caret /></CaretLine>
            </Large>
            <Large $w={50} $off>
              <LargeIcon><MoveIcon /></LargeIcon>
              <LargeText>Move</LargeText>
              <CaretLine><Caret $off /></CaretLine>
            </Large>
            <Large $w={50}>
              <LargeIcon><ModeIcon /></LargeIcon>
              <LargeText>Mode</LargeText>
              <CaretLine><Caret /></CaretLine>
            </Large>
          </GroupBody>
          <GroupLabel>Tasks</GroupLabel>
        </Group>
        <Group $w={278}>
          <GroupBody $pl={6}>
            <Large $w={48}>
              <LargeIcon><TaskIcon /></LargeIcon>
              <LargeText>Task</LargeText>
              <CaretLine><Caret /></CaretLine>
            </Large>
            <Large $w={66}>
              <LargeIcon><SummaryIcon /></LargeIcon>
              <LargeText>Summary</LargeText>
            </Large>
            <Large $w={72}>
              <LargeIcon><MilestoneIcon /></LargeIcon>
              <LargeText>Milestone</LargeText>
            </Large>
            <Large $w={78} $off>
              <LargeIcon><DeliverIcon /></LargeIcon>
              <LargeText>Deliverable</LargeText>
              <CaretLine><Caret $off /></CaretLine>
            </Large>
          </GroupBody>
          <GroupLabel>Insert</GroupLabel>
        </Group>
        <Group $w={231}>
          <GroupBody>
            <Large $w={88}>
              <LargeIcon><InfoIcon /></LargeIcon>
              <LargeText>Information</LargeText>
            </Large>
            <Stack $ml={3}>
              <SmallRow><SmallIcon><NoteIcon /></SmallIcon>Notes</SmallRow>
              <SmallRow><SmallIcon><DetailsIcon /></SmallIcon>Details</SmallRow>
              <SmallRow $off><SmallIcon><AddTimelineIcon /></SmallIcon>Add to Timeline</SmallRow>
            </Stack>
          </GroupBody>
          <GroupLabel>Properties</GroupLabel>
        </Group>
        <Group $w={136}>
          <GroupBody>
            <Large $w={59}>
              <LargeIcon><ScrollIcon /></LargeIcon>
              <LargeText>Scroll{'\n'}to Task</LargeText>
            </Large>
            <Stack>
              <SmallRow><SmallIcon><Search size={19} color="#4a77a8" strokeWidth={2.4} style={{ transform: 'scaleX(-1)' }} /></SmallIcon>Find <Caret $ml={10} /></SmallRow>
              <SmallRow><SmallIcon><EraserIcon /></SmallIcon>Clear <Caret $ml={2} /></SmallRow>
              <SmallRow><SmallIcon><FillIcon /></SmallIcon>Fill <Caret $ml={3} /></SmallRow>
            </Stack>
          </GroupBody>
          <GroupLabel>Editing</GroupLabel>
        </Group>
        <Collapse><CollapseIcon /></Collapse>
      </Ribbon>

      <TimelineWrap>
        <SideTag $c="#5c5c5c" $ls={0.4}><span>TIMELINE</span></SideTag>
        <Canvas>
          <RangeStart>Tue 14/11/17</RangeStart>
          <RangeEnd>Sat 16/12/17</RangeEnd>
          <BarEdge />
          <HLine $x={133} $w={549} $y={62} $c="#555" />
          <HLine $x={133} $w={549} $y={96} $c="#555" />
          <HLine $x={682} $w={1077} $y={62} $c="#aaa" />
          <HLine $x={682} $w={1077} $y={96} $c="#aaa" />
          <EndBox />
          {scale.map((t, i) => {
            const x = 198 + Math.round(i * 123.4);
            const old = i < 4;
            return (
              <React.Fragment key={t}>
                <Tick $c={old ? '#555' : '#aaa'} style={{ left: x }} />
                <Lbl $c={old ? '#555' : '#aaa'} style={{ left: x + 2, top: 42 }}>{t}</Lbl>
              </React.Fragment>
            );
          })}
          <StartLbl>Start</StartLbl>
          <StartDate>Wed 15/11/17</StartDate>
          <FinishLbl>Finish</FinishLbl>
          <FinishDate>Thu 15/02/18</FinishDate>
          <AddHint>Add tasks with dates to the timeline</AddHint>
          <RangeLine $x={108} />
          <RangeLine $x={681} />
          <Flag>Today</Flag>
        </Canvas>
      </TimelineWrap>

      <Main>
        <SideTag $c="#31752f" $ls={0.3}><span>GANTT CHART</span></SideTag>
        <TablePane>
          <HeadGrid>
            <CornerCell />
            <InfoCell><InfoBadge /></InfoCell>
            <ModeHead>{'Task\nMode'}<CaretWrap><HeadCaret /></CaretWrap></ModeHead>
            <HeadCell>Task Name<CaretWrap><HeadCaret /></CaretWrap></HeadCell>
            <HeadCell>Duration<CaretWrap><HeadCaret /></CaretWrap></HeadCell>
            <HeadCell>Start<CaretWrap><HeadCaret /></CaretWrap></HeadCell>
            <HeadCell>Finish<CaretWrap><HeadCaret /></CaretWrap></HeadCell>
            <HeadCell>Predecessors<CaretWrap><HeadCaret /></CaretWrap></HeadCell>
            <HeadCell>Resource Names<CaretWrap><HeadCaret /></CaretWrap></HeadCell>
            <AddCell>Add</AddCell>
          </HeadGrid>
          <TableBody>
            {rows.map(r => (
              <Row key={r.n} $h={r.h} $bold={r.sum}>
                <NumCell>{r.n}</NumCell>
                <Cell />
                <ModeCell><PinSmall c="#5cc6c6" stem="#3a6f80" /></ModeCell>
                <NameCell $sum={r.sum}>
                  {r.sum && <Twist><TwistIcon /></Twist>}
                  {r.name}
                </NameCell>
                <Cell>{r.dur}</Cell>
                <DateCell>{r.start}</DateCell>
                <DateCell>{r.wavy ? <Squiggle>{r.finish}</Squiggle> : r.finish}</DateCell>
                <PredCell>{r.pred}</PredCell>
                <Cell />
                <Cell />
              </Row>
            ))}
          </TableBody>
          <ScrollH>
            <Arrow><TriL /></Arrow>
            <Thumb $w={811} />
            <Spring />
            <Arrow><TriR /></Arrow>
            <Splitter />
          </ScrollH>
        </TablePane>
        <Splitter />
        <GanttPane>
          <GanttHead>
            <WeekRow>
              {weeks.map(w => <Week key={w.t} $w={w.w}>{w.t}</Week>)}
            </WeekRow>
            <DayRow>
              {days.map((d, i) => <Day key={i}>{d}</Day>)}
            </DayRow>
          </GanttHead>
          <Chart><GanttSvg /></Chart>
          <GanttScrollBar>
            <Arrow><TriL /></Arrow>
            <Thumb $w={229} $ml={49} />
            <Spring />
            <Arrow><TriR /></Arrow>
          </GanttScrollBar>
        </GanttPane>
        <ScrollV>
          <Arrow><TriU /></Arrow>
          <VThumb />
          <VFill />
          <Arrow><TriD /></Arrow>
        </ScrollV>
      </Main>

      <Status>
        <Ready>Ready</Ready>
        <NewTasks><PinSmall c="#6e6e6e" stem="#6e6e6e" />New Tasks : Manually Scheduled</NewTasks>
        <Spring />
        <ViewBtn $on><ViewIcon k={0} /></ViewBtn>
        <ViewBtn><ViewIcon k={1} /></ViewBtn>
        <ViewBtn><ViewIcon k={2} /></ViewBtn>
        <ViewBtn><ViewIcon k={3} /></ViewBtn>
        <ViewBtn><ViewIcon k={4} /></ViewBtn>
        <Zoom>
          <svg width="9" height="3" viewBox="0 0 9 3"><rect width="9" height="3" fill="#666" /></svg>
          <ZTrack><ZThumb /></ZTrack>
          <svg width="13" height="13" viewBox="0 0 13 13"><path d="M5 0h3v5h5v3H8v5H5V8H0V5h5z" fill="#666" /></svg>
        </Zoom>
      </Status>
      <BlackEdge />

      <Ink width="145" height="75" viewBox="745 280 145 75">
        <path d="M797 286 C810 285 820 286 826 288 C845 293 860 301 872 313 C878 320 880 330 877 338 C862 342 846 344 826 346 C806 348 788 348 775 345 C766 340 760 332 755 320 C752 310 752 297 756 288 C770 287 790 291 813 298 C810 292 804 289 797 286 Z" fill="none" stroke="#e01f2d" strokeWidth="5.500" strokeLinejoin="round" />
      </Ink>
    </Page>
  );
}
